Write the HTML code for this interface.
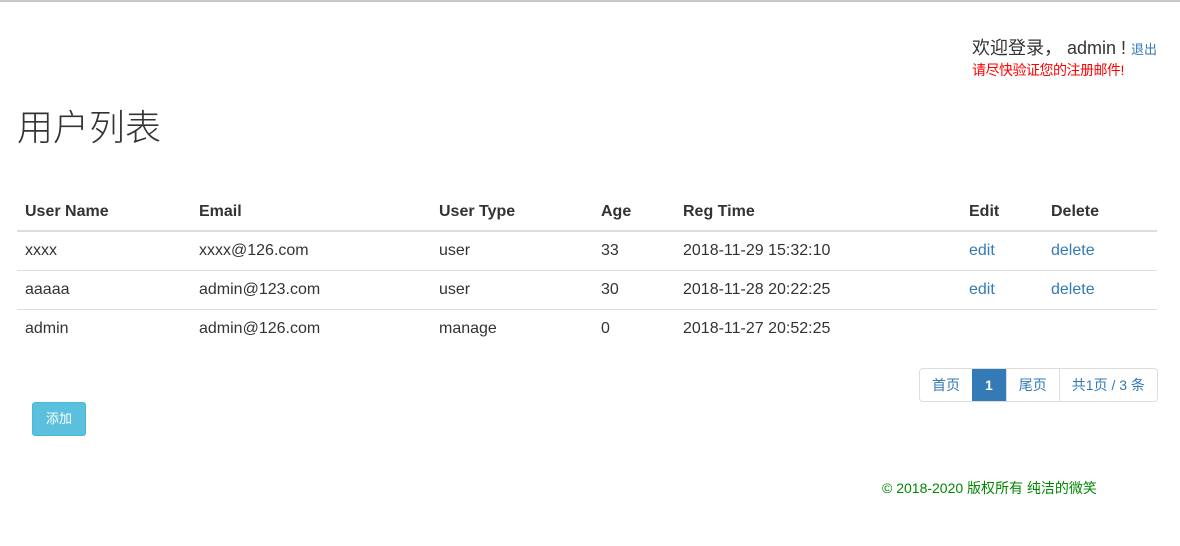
<!DOCTYPE html>
<html><head><meta charset="utf-8"><style>
body{margin:0;width:1180px;height:546px;background:#fff;font-family:"Liberation Sans","Noto Sans CJK SC",sans-serif;color:#333;font-size:16px;position:relative;overflow:hidden}
.a{position:absolute;white-space:nowrap}
.topline{position:absolute;left:0;top:0;width:1180px;height:2px;background:#c8c8c8}
table{position:absolute;left:17px;top:193px;width:1140px;border-collapse:collapse}
th{text-align:left;font-weight:bold;height:37px;padding:0 8px;border-bottom:2px solid #ddd;vertical-align:middle}
td{height:38px;padding:0 8px;border-top:1px solid #ddd;vertical-align:middle}
a{color:#337ab7;text-decoration:none}
.pg{position:absolute;left:919px;top:368px;height:32px;display:flex;border:1px solid #ddd;border-radius:4px;font-size:14px}
.pg span{display:block;line-height:32px;padding:0 12px;color:#337ab7;border-left:1px solid #ddd}
.pg span:first-child{border-left:none}
.pg .on{background:#337ab7;color:#fff;font-weight:bold;padding:0 13px;border-left:none}
</style></head><body>
<div class="topline"></div>
<div class="a" style="left:972px;top:34px;font-size:18px">欢迎登录， admin ! <a style="font-size:13px">退出</a></div>
<div class="a" style="left:972px;top:60px;font-size:14px;color:#f00;letter-spacing:-0.5px">请尽快验证您的注册邮件!</div>
<div class="a" style="left:17px;top:99px;font-size:36px;font-weight:300">用户列表</div>
<table>
<tr><th style="width:158px">User Name</th><th style="width:224px">Email</th><th style="width:146px">User Type</th><th style="width:66px">Age</th><th style="width:270px">Reg Time</th><th style="width:66px">Edit</th><th>Delete</th></tr>
<tr><td>xxxx</td><td>xxxx@126.com</td><td>user</td><td>33</td><td>2018-11-29 15:32:10</td><td><a>edit</a></td><td><a>delete</a></td></tr>
<tr><td>aaaaa</td><td>admin@123.com</td><td>user</td><td>30</td><td>2018-11-28 20:22:25</td><td><a>edit</a></td><td><a>delete</a></td></tr>
<tr><td>admin</td><td>admin@126.com</td><td>manage</td><td>0</td><td>2018-11-27 20:52:25</td><td></td><td></td></tr>
</table>
<div class="pg"><span>首页</span><span class="on">1</span><span>尾页</span><span>共1页 / 3 条</span></div>
<div class="a" style="left:32px;top:402px;width:54px;height:34px;background:#5bc0de;border:1px solid #46b8da;box-sizing:border-box;border-radius:3px;color:#fff;font-size:13px;line-height:32px;text-align:center">添加</div>
<div class="a" style="left:882px;top:478px;font-size:14px;color:#080">© 2018-2020 版权所有 纯洁的微笑</div>
</body></html>
